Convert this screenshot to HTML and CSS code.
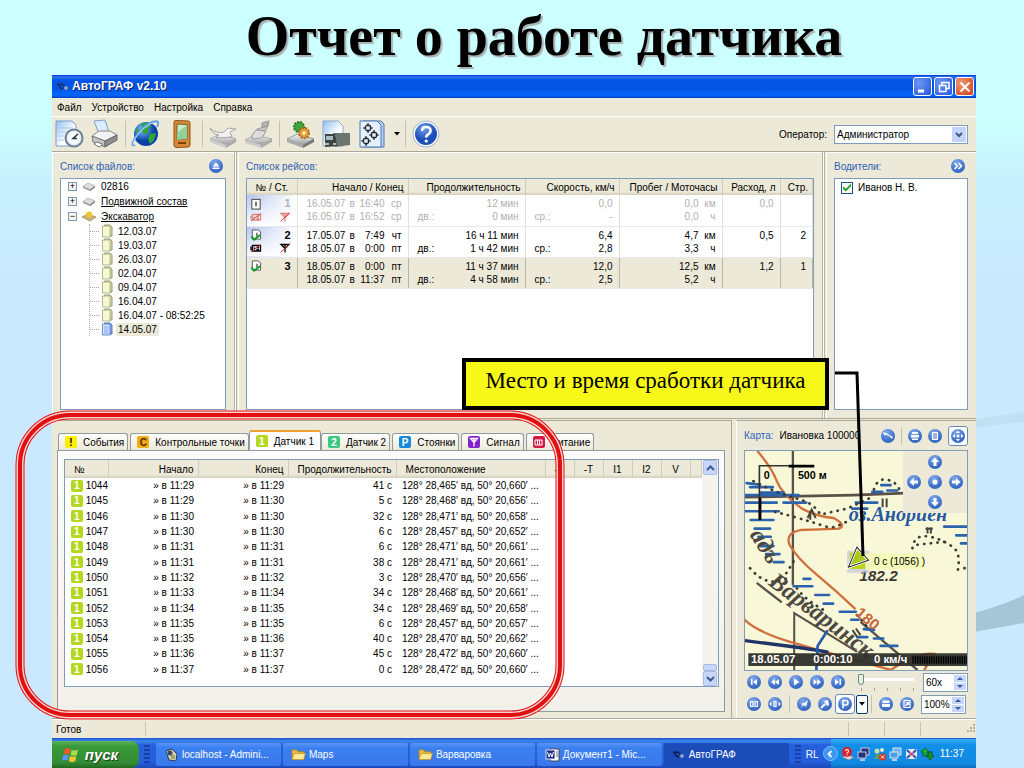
FILE: index.html
```
<!DOCTYPE html>
<html lang="ru">
<head>
  <meta charset="UTF-8">
  <meta name="viewport" content="width=device-width, initial-scale=1.0">
  <title>Отчет о работе датчика</title>
  <link rel="stylesheet" href="styles.css">
</head>
<body>

  <!-- icons -->
  <svg class="sprite" width="0" height="0" aria-hidden="true">
    <defs>
      <linearGradient id="gPaper" x1="0" y1="0" x2="1" y2="1"><stop offset="0" stop-color="#8fc0ef"/><stop offset=".6" stop-color="#fff"/></linearGradient>
      <linearGradient id="gGrey" x1="0" y1="0" x2="0" y2="1"><stop offset="0" stop-color="#f8f8f8"/><stop offset="1" stop-color="#9a9a9a"/></linearGradient>
      <radialGradient id="gGlobe" cx=".35" cy=".3"><stop offset="0" stop-color="#7cc4f8"/><stop offset="1" stop-color="#0a3fa8"/></radialGradient>
      <radialGradient id="gHelp" cx=".4" cy=".25"><stop offset="0" stop-color="#6f9ff0"/><stop offset="1" stop-color="#1f50b8"/></radialGradient>
    </defs>
    <symbol id="i-disk" viewBox="0 0 14 10">
      <path d="M1 5L6 1.500L13 4.500L8 8.500Z" fill="#ddd" stroke="#999" stroke-width=".6"/>
      <path d="M1 5L8 8V9.500L1 6.500Z" fill="#999"/><path d="M8 8L13 4.500V6L8 9.500Z" fill="#777"/>
    </symbol>
    <symbol id="i-doc" viewBox="0 0 12 14">
      <path d="M3.500 1H9L11 3V12H3.500Z" fill="#d9dfae" stroke="#7d8450" stroke-width=".8"/>
      <path d="M1.500 2H7.500L9 3.500V13H1.500Z" fill="#f6f9d4" stroke="#a0a673" stroke-width=".8"/>
    </symbol>
    <symbol id="i-docblue" viewBox="0 0 12 14">
      <path d="M3.500 1H9L11 3V12H3.500Z" fill="#8fb2ee" stroke="#2b57b0" stroke-width=".8"/>
      <path d="M1.500 2H7.500L9 3.500V13H1.500Z" fill="#d5e5ff" stroke="#4a76c8" stroke-width=".8"/>
      <path d="M3 5H7.500M3 7H7.500M3 9H7.500M3 11H7.500" stroke="#6f97e0" stroke-width=".8"/>
    </symbol>
    <symbol id="i-trip" viewBox="0 0 12 13">
      <rect x="1.500" y="1.500" width="9" height="10.500" fill="#fff" stroke="#555" stroke-width="1.200"/>
      <path d="M6 4V9" stroke="#444" stroke-width="1.600"/>
    </symbol>
    <symbol id="i-tripok" viewBox="0 0 12 13">
      <path d="M2 1H8L11 3V11H2Z" fill="#fff" stroke="#555"/><path d="M7 4V8" stroke="#444" stroke-width="1.400"/>
      <path d="M1 8L4 11.500L10.500 6.500" fill="none" stroke="#129a22" stroke-width="2.200"/>
    </symbol>
    <symbol id="i-batt" viewBox="0 0 12 9">
      <path d="M1 3V7M2.500 2H10.500V7.500H2.500ZM4.500 4V6M6.500 4H9M6.500 6H9" fill="none" stroke="currentColor" stroke-width="1.300"/>
      <path d="M1 8.500L11 1" stroke="#e03a30" stroke-width=".9"/>
    </symbol>
    <symbol id="i-ant" viewBox="0 0 12 11">
      <path d="M2 2H10L6 6ZM6 2V10" fill="none" stroke="currentColor" stroke-width="1.300"/>
      <path d="M1.500 10L10.500 1.500" stroke="#e03a30"/>
    </symbol>
    <symbol id="i-folder" viewBox="0 0 16 14">
      <path d="M1 2H6L7.500 4H14V12H1Z" fill="#e8b93a" stroke="#a87d18" stroke-width=".7"/>
      <path d="M3.500 6H15.500L13.500 12.500H1Z" fill="#fdeb9a" stroke="#b98d20" stroke-width=".7"/>
    </symbol>
  </svg>

  <svg class="waves" viewBox="0 0 1024 768" preserveAspectRatio="none" aria-hidden="true">
    <path d="M930 426L1024 412V422Q990 424 930 436Z" fill="#b9dceb" opacity=".6"/>
    <path d="M930 622Q985 614 1024 595V623L930 640Z" fill="#a5c6d6"/>
  </svg>

  <h1 class="slide-title">Отчет о работе датчика</h1>

  <div class="window">
    <header class="titlebar">
      <svg width="14" height="12" viewBox="0 0 14 12" aria-hidden="true"><path d="M1 4L6 3L9 6L12 8M3 6L7 8M2 2L5 8" stroke="#1b2f60" stroke-width="1.500" fill="none"/><circle cx="10" cy="7" r="2" fill="#8ea0c8"/></svg>
      <span class="titlebar-text">АвтоГРАФ v2.10</span>
      <button class="win-btn" aria-label="Свернуть"><svg width="16" height="16" viewBox="0 0 16 16"><path d="M3 12H9" stroke="#fff" stroke-width="3"/></svg></button>
      <button class="win-btn" aria-label="Восстановить"><svg width="16" height="16" viewBox="0 0 16 16"><path d="M6 6V3.500H13V9.500H10.500M3.500 6.500H10V12.500H3.500Z" stroke="#fff" stroke-width="1.500" fill="none"/></svg></button>
      <button class="win-btn close" aria-label="Закрыть"><svg width="16" height="16" viewBox="0 0 16 16"><path d="M3.500 3.500L12.500 12.500M12.500 3.500L3.500 12.500" stroke="#fff" stroke-width="2"/></svg></button>
    </header>

    <nav class="menubar">
      <a href="#">Файл</a>
      <a href="#">Устройство</a>
      <a href="#">Настройка</a>
      <a href="#">Справка</a>
    </nav>

    <div class="toolbar">
      <button class="tool" aria-label="Отчет за период"><svg width="30" height="30" viewBox="0 0 30 30">
        <path d="M2 2H18L22 6V27H2Z" fill="url(#gPaper)" stroke="#7d9cc8"/><path d="M4 9H19M4 13H12M4 17H10M4 21H10" stroke="#a9c8ee"/>
        <circle cx="20" cy="19" r="8.500" fill="#e4eef4" stroke="#6e7f92" stroke-width="2"/><circle cx="20" cy="19" r="6" fill="#f7fbfc"/><path d="M24 15L19 19.500H23" stroke="#234" stroke-width="1.500" fill="none"/></svg></button>
      <button class="tool" aria-label="Печать"><svg width="30" height="30" viewBox="0 0 30 30">
        <path d="M4 2L15 1L19 13L9 15Z" fill="#dcecff" stroke="#7f9fc8"/><path d="M2 17L9 12H20L27 16L15 22Z" fill="#f2f2f2" stroke="#888"/>
        <path d="M2 17L15 22V28L3 23Z" fill="#c4c4c4" stroke="#777"/><path d="M15 22L27 16V21L15 28Z" fill="#8e8e8e" stroke="#666"/><path d="M7 23L13 25.500L9 28L4 25Z" fill="#fff" stroke="#777"/></svg></button>
      <span class="tool-sep"></span>
      <button class="tool" aria-label="Интернет"><svg width="30" height="30" viewBox="0 0 30 30">
        <circle cx="15" cy="15" r="12" fill="url(#gGlobe)"/><path d="M11 5Q16 2 20 6L17 10L18 14L13 15L10 11ZM19 15L25 14Q24 22 19 25L17 20ZM6 9L9 12L7 15L4 13Z" fill="#2fa63a"/>
        <path d="M4 26Q-1 28 4 19Q10 8 21 3Q30 0 26 8" fill="none" stroke="#5f9fe8" stroke-width="2"/><path d="M4 26Q0 26 5 18Q11 9 21 4" fill="none" stroke="#d5eaff" stroke-width=".8"/></svg></button>
      <button class="tool" aria-label="Карманный компьютер"><svg width="30" height="30" viewBox="0 0 30 30">
        <path d="M7 3Q7 1.500 9 1.500L21 2Q23 2 23 4V26Q23 28 21 28L9 28.500Q7 28 7 26Z" fill="#d98a35" stroke="#8c4f14"/><path d="M10 5L20 5.500V20L10 21Z" fill="#c9ecc8" stroke="#7a5a22"/><path d="M10 14L20 6V20L10 21Z" fill="#8fcf98"/><path d="M11 24H19" stroke="#7a4210" stroke-width="2"/></svg></button>
      <span class="tool-sep"></span>
      <button class="tool" aria-label="Записать на диск"><svg width="30" height="30" viewBox="0 0 30 30">
        <path d="M2 20L12 15L28 20L18 26Z" fill="url(#gGrey)" stroke="#aaa"/><path d="M2 20L18 26V29L2 23Z" fill="#ccc"/><path d="M18 26L28 20V23L18 29Z" fill="#aaa"/>
        <path d="M2 9Q8 15 16 13L20 9L28 10L22 13L24 18L8 19L11 16Q4 15 2 9Z" fill="#f2f2f2" stroke="#a4a4a4"/></svg></button>
      <button class="tool" aria-label="Очистить диск"><svg width="30" height="30" viewBox="0 0 30 30">
        <path d="M1 21L11 16L28 20L17 26Z" fill="url(#gGrey)" stroke="#aaa"/><path d="M1 21L17 26V29L1 24Z" fill="#ccc"/><path d="M17 26L28 20V23L17 29Z" fill="#aaa"/>
        <path d="M18 4L25 2L24 7L18 8Z" fill="#b4b4b4" stroke="#999"/><path d="M13 10L24 7L21 12L13 13Z" fill="#c8c8c8" stroke="#999"/><path d="M8 16L12 11L22 12L18 19L8 20Z" fill="#ddd" stroke="#999"/></svg></button>
      <span class="tool-sep"></span>
      <button class="tool" aria-label="Настройки устройства"><svg width="30" height="30" viewBox="0 0 30 30">
        <path d="M2 20L12 15L29 20L18 26Z" fill="url(#gGrey)" stroke="#999"/><path d="M2 20L18 26V29L2 23Z" fill="#aaa"/><path d="M18 26L29 20V23L18 29Z" fill="#777"/>
        <circle cx="14" cy="8" r="5" fill="#3fa53a" stroke="#2b7a28" stroke-width="2" stroke-dasharray="2 1"/><circle cx="19" cy="14" r="5" fill="#e8a43a" stroke="#a86a14" stroke-width="2" stroke-dasharray="2 1"/><circle cx="19" cy="14" r="1.500" fill="#fff"/></svg></button>
      <button class="tool" aria-label="Транспорт"><svg width="30" height="30" viewBox="0 0 30 30">
        <path d="M2 2H17L22 7V27H2Z" fill="url(#gPaper)" stroke="#8fa8cc"/><path d="M12 14L29 14V26L14 28Z" fill="#6b756f"/><path d="M4 15H14L16 27L4 28Z" fill="#3c4643"/><path d="M5 17H12V21H5Z" fill="#a9bcc4"/><path d="M4 25H8M12 25H15" stroke="#e6e6d0" stroke-width="1.500"/></svg></button>
      <button class="tool" aria-label="Контрольные точки"><svg width="30" height="30" viewBox="0 0 30 30">
        <path d="M6 2H24L27 5V28H6Z" fill="#b6cff2" stroke="#4f74b4"/><path d="M3 2H20L24 6V28H3Z" fill="#e3f0ff" stroke="#4f74b4"/>
        <g fill="none" stroke="#222" stroke-width="1.200"><circle cx="11" cy="9" r="2.800"/><path d="M11 4V7.500M11 10.500V14M6 9H9.500M12.500 9H16"/><circle cx="17" cy="16" r="2.800"/><path d="M17 11V14.500M17 17.500V21M12 16H15.500M18.500 16H22"/><circle cx="9" cy="22" r="2.800"/><path d="M9 17V20.500M9 23.500V27M4 22H7.500M10.500 22H14"/></g></svg></button>
      <button class="tool-arrow" aria-label="Еще"><svg width="6" height="4" viewBox="0 0 6 4"><path d="M0 0H6L3 3.500Z" fill="#000"/></svg></button>
      <span class="tool-sep"></span>
      <button class="tool" aria-label="Помощь"><svg width="30" height="30" viewBox="0 0 30 30">
        <circle cx="15" cy="15" r="13" fill="#fff" stroke="#9fb4dc"/><circle cx="15" cy="15" r="11" fill="url(#gHelp)"/><path d="M11 12Q11 8 15 8Q19.500 8 19.500 11.500Q19.500 14 17 15.500Q15.200 16.500 15.200 18.500" fill="none" stroke="#fff" stroke-width="2.600"/><circle cx="15.200" cy="22" r="1.600" fill="#fff"/></svg></button>

      <label class="operator-label" for="operator">Оператор:</label>
      <span class="combo">
        <select id="operator"><option>Администратор</option></select>
        <svg width="14" height="15" viewBox="0 0 14 15" aria-hidden="true"><path d="M4 6L7 9L10 6" fill="none" stroke="#3c5a8c" stroke-width="2"/></svg>
      </span>
    </div>

    <main class="workspace">
      <div class="top-panes">
        <section class="pane">
          <div class="pane-head">
            <h2>Список файлов:</h2>
            <button class="round" aria-label="Свернуть список"><svg viewBox="0 0 14 14"><path d="M3.500 7.500L7 3.500L10.500 7.500ZM3.500 8.500H10.500V10H3.500Z" fill="#fff"/></svg></button>
          </div>
          <div class="box">
            <ul class="tree">
              <li><span class="node"><span class="toggle">+</span><svg class="node-icon"><use href="#i-disk"/></svg><span>02816</span></span></li>
              <li><span class="node"><span class="toggle">+</span><svg class="node-icon"><use href="#i-disk"/></svg><u>Подвижной состав</u></span></li>
              <li><span class="node"><span class="toggle">−</span><svg class="node-icon" viewBox="0 0 14 11"><path d="M0 6L6 3L14 6L8 10Z" fill="#c9b27a" stroke="#8a7442" stroke-width=".6"/><circle cx="7" cy="3.500" r="3" fill="#f2c62c"/></svg><u>Экскаватор</u></span>
                <ul>
                  <li><svg><use href="#i-doc"/></svg><span>12.03.07</span></li>
                  <li><svg><use href="#i-doc"/></svg><span>19.03.07</span></li>
                  <li><svg><use href="#i-doc"/></svg><span>26.03.07</span></li>
                  <li><svg><use href="#i-doc"/></svg><span>02.04.07</span></li>
                  <li><svg><use href="#i-doc"/></svg><span>09.04.07</span></li>
                  <li><svg><use href="#i-doc"/></svg><span>16.04.07</span></li>
                  <li><svg><use href="#i-doc"/></svg><span>16.04.07 - 08:52:25</span></li>
                  <li><svg><use href="#i-docblue"/></svg><span class="current">14.05.07</span></li>
                </ul>
              </li>
            </ul>
          </div>
        </section>

        <section class="pane">
          <div class="pane-head"><h2>Список рейсов:</h2></div>
          <div class="box">
            <table class="trips">
              <colgroup><col class="w-no"><col class="w-time"><col class="w-dur"><col class="w-speed"><col class="w-run"><col class="w-fuel"><col></colgroup>
              <thead>
                <tr><th>№ / Ст.</th><th>Начало / Конец</th><th>Продолжительность</th><th>Скорость, км/ч</th><th>Пробег / Моточасы</th><th>Расход, л</th><th>Стр.</th></tr>
              </thead>
              <tbody>
                <tr class="off">
                  <td><div class="line"><svg class="st"><use href="#i-trip"/></svg><b>1</b></div><div class="line red"><svg class="st"><use href="#i-batt"/></svg><svg class="st"><use href="#i-ant"/></svg></div></td>
                  <td><div class="when"><span>16.05.07</span><span>в</span><span>16:40</span><span>ср</span></div><div class="when"><span>16.05.07</span><span>в</span><span>16:52</span><span>ср</span></div></td>
                  <td><div class="line"><span></span><span>12 мин</span></div><div class="line"><span>дв.:</span><span>0 мин</span></div></td>
                  <td><div class="line"><span></span><span>0,0</span></div><div class="line"><span>ср.:</span><span>-</span></div></td>
                  <td><div class="run"><span>0,0</span><span>км</span></div><div class="run"><span>0,0</span><span>ч</span></div></td>
                  <td>0,0</td>
                  <td></td>
                </tr>
                <tr>
                  <td><div class="line"><svg class="st"><use href="#i-tripok"/></svg><b>2</b></div><div class="line"><svg class="st"><use href="#i-batt"/></svg><svg class="st"><use href="#i-ant"/></svg></div></td>
                  <td><div class="when"><span>17.05.07</span><span>в</span><span>7:49</span><span>чт</span></div><div class="when"><span>18.05.07</span><span>в</span><span>0:00</span><span>пт</span></div></td>
                  <td><div class="line"><span></span><span>16 ч 11 мин</span></div><div class="line"><span>дв.:</span><span>1 ч 42 мин</span></div></td>
                  <td><div class="line"><span></span><span>6,4</span></div><div class="line"><span>ср.:</span><span>2,8</span></div></td>
                  <td><div class="run"><span>4,7</span><span>км</span></div><div class="run"><span>3,3</span><span>ч</span></div></td>
                  <td>0,5</td>
                  <td>2</td>
                </tr>
                <tr class="picked">
                  <td><div class="line"><svg class="st"><use href="#i-tripok"/></svg><b>3</b></div></td>
                  <td><div class="when"><span>18.05.07</span><span>в</span><span>0:00</span><span>пт</span></div><div class="when"><span>18.05.07</span><span>в</span><span>11:37</span><span>пт</span></div></td>
                  <td><div class="line"><span></span><span>11 ч 37 мин</span></div><div class="line"><span>дв.:</span><span>4 ч 58 мин</span></div></td>
                  <td><div class="line"><span></span><span>12,0</span></div><div class="line"><span>ср.:</span><span>2,5</span></div></td>
                  <td><div class="run"><span>12,5</span><span>км</span></div><div class="run"><span>5,2</span><span>ч</span></div></td>
                  <td>1,2</td>
                  <td>1</td>
                </tr>
              </tbody>
            </table>
          </div>
        </section>

        <section class="pane">
          <div class="pane-head">
            <h2>Водители:</h2>
            <button class="round" aria-label="Развернуть"><svg viewBox="0 0 14 14"><path d="M3.500 4L6.500 7L3.500 10M7.500 4L10.500 7L7.500 10" fill="none" stroke="#fff" stroke-width="1.500"/></svg></button>
          </div>
          <div class="box">
            <label class="driver"><input type="checkbox" checked>Иванов Н. В.</label>
          </div>
        </section>
      </div>

      <div class="bottom-panes">
        <section class="events">
          <div class="tabs" role="tablist">
            <button role="tab"><i class="badge yellow">!</i>События</button>
            <button role="tab"><i class="badge amber">C</i>Контрольные точки</button>
            <button role="tab" class="active" aria-selected="true"><i class="badge lime">1</i>Датчик 1</button>
            <button role="tab"><i class="badge mint">2</i>Датчик 2</button>
            <button role="tab"><i class="badge blue">P</i>Стоянки</button>
            <button role="tab"><i class="badge violet"><svg width="10" height="10" viewBox="0 0 10 10" aria-hidden="true"><path d="M1.500 1.500H8.500L5 5.500ZM5 2V9.500" fill="none" stroke="#fff" stroke-width="1.300"/></svg></i>Сигнал</button>
            <button role="tab"><i class="badge crimson"><svg width="9" height="7" viewBox="0 0 9 7" aria-hidden="true"><path d="M1 1H8V6H1ZM3.500 1V6M5.500 1V6" fill="none" stroke="#fff"/></svg></i>Питание</button>
          </div>
          <div class="tab-page">
            <div class="list">
              <table class="sensor">
                <colgroup><col class="s-no"><col class="s-from"><col class="s-to"><col class="s-dur"><col class="s-place"><col class="s-in"><col class="s-in"><col class="s-in"><col class="s-in"><col class="s-in"><col></colgroup>
                <thead>
                  <tr><th>№</th><th>Начало</th><th>Конец</th><th>Продолжительность</th><th>Местоположение</th><th>-B</th><th>-T</th><th>I1</th><th>I2</th><th>V</th><th></th></tr>
                </thead>
                <tbody>
                  <tr><td><i class="badge lime">1</i>1044</td><td>» в 11:29</td><td>» в 11:29</td><td>41 с</td><td colspan="7">128° 28,465′ вд, 50° 20,660′ ...</td></tr>
                  <tr><td><i class="badge lime">1</i>1045</td><td>» в 11:29</td><td>» в 11:30</td><td>5 с</td><td colspan="7">128° 28,468′ вд, 50° 20,656′ ...</td></tr>
                  <tr><td><i class="badge lime">1</i>1046</td><td>» в 11:30</td><td>» в 11:30</td><td>32 с</td><td colspan="7">128° 28,471′ вд, 50° 20,658′ ...</td></tr>
                  <tr><td><i class="badge lime">1</i>1047</td><td>» в 11:30</td><td>» в 11:30</td><td>6 с</td><td colspan="7">128° 28,457′ вд, 50° 20,652′ ...</td></tr>
                  <tr><td><i class="badge lime">1</i>1048</td><td>» в 11:31</td><td>» в 11:31</td><td>6 с</td><td colspan="7">128° 28,471′ вд, 50° 20,661′ ...</td></tr>
                  <tr><td><i class="badge lime">1</i>1049</td><td>» в 11:31</td><td>» в 11:31</td><td>38 с</td><td colspan="7">128° 28,471′ вд, 50° 20,661′ ...</td></tr>
                  <tr><td><i class="badge lime">1</i>1050</td><td>» в 11:32</td><td>» в 11:32</td><td>3 с</td><td colspan="7">128° 28,470′ вд, 50° 20,656′ ...</td></tr>
                  <tr><td><i class="badge lime">1</i>1051</td><td>» в 11:33</td><td>» в 11:34</td><td>34 с</td><td colspan="7">128° 28,468′ вд, 50° 20,661′ ...</td></tr>
                  <tr><td><i class="badge lime">1</i>1052</td><td>» в 11:34</td><td>» в 11:35</td><td>34 с</td><td colspan="7">128° 28,469′ вд, 50° 20,658′ ...</td></tr>
                  <tr><td><i class="badge lime">1</i>1053</td><td>» в 11:35</td><td>» в 11:35</td><td>6 с</td><td colspan="7">128° 28,457′ вд, 50° 20,657′ ...</td></tr>
                  <tr><td><i class="badge lime">1</i>1054</td><td>» в 11:35</td><td>» в 11:36</td><td>40 с</td><td colspan="7">128° 28,470′ вд, 50° 20,662′ ...</td></tr>
                  <tr><td><i class="badge lime">1</i>1055</td><td>» в 11:36</td><td>» в 11:37</td><td>45 с</td><td colspan="7">128° 28,472′ вд, 50° 20,660′ ...</td></tr>
                  <tr><td><i class="badge lime">1</i>1056</td><td>» в 11:37</td><td>» в 11:37</td><td>0 с</td><td colspan="7">128° 28,472′ вд, 50° 20,660′ ...</td></tr>
                </tbody>
              </table>
              <div class="scroll">
                <button aria-label="Вверх"><svg width="9" height="6" viewBox="0 0 9 6"><path d="M1 5L4.500 1.500L8 5" fill="none" stroke="#3c5a8c" stroke-width="2"/></svg></button>
                <span class="track"></span>
                <span class="thumb"></span>
                <button aria-label="Вниз"><svg width="9" height="6" viewBox="0 0 9 6"><path d="M1 1L4.500 4.500L8 1" fill="none" stroke="#3c5a8c" stroke-width="2"/></svg></button>
              </div>
            </div>
          </div>
        </section>

        <section class="map-pane">
          <div class="map-head">
            <h2>Карта:</h2>
            <span class="map-name">Ивановка 100000</span>
            <button class="round" aria-label="Слой"><svg viewBox="0 0 14 14"><path d="M2 3L5 4Q8 6 12 8L11 10Q7 5 3 6Z" fill="#fff"/></svg></button>
            <span class="tool-sep"></span>
            <button class="round" aria-label="Печать карты"><svg viewBox="0 0 14 14"><path d="M4 3H10V5H4ZM3 6H11V8.500H3ZM4 9.500H10V11H4Z" fill="#fff"/></svg></button>
            <button class="round" aria-label="Легенда"><svg viewBox="0 0 14 14"><path d="M4 3H10V11H4Z" fill="#fff"/><path d="M5 5H9M5 7H9M5 9H9" stroke="#3a6cc4"/></svg></button>
            <span class="framed"><button class="round" aria-label="Навигация"><svg viewBox="0 0 14 14"><path d="M7 1.500L9 4H5ZM7 12.500L9 10H5ZM1.500 7L4 5V9ZM12.500 7L10 5V9Z" fill="#fff"/><circle cx="7" cy="7" r="1.500" fill="#fff"/></svg></button></span>
          </div>

          <div class="map">
            <svg class="map-canvas" viewBox="42 90 669 654" preserveAspectRatio="xMidYMid slice" role="img" aria-label="Карта местности">
              <rect x="0" y="0" width="760" height="800" fill="#f8f8d8"/>
              <g fill="none" stroke="#5a5048">
                <path d="M188 90V490" stroke-width="7"/><path d="M42 228L370 222L520 216" stroke-width="8"/><path d="M192 744V574L380 690" stroke-width="6"/>
                <path d="M80 484L155 542M390 600L470 668L560 744" stroke-width="7"/>
              </g>
              <g fill="none" stroke="#d0703c" stroke-width="7">
                <path d="M82 90Q125 140 140 180T215 262Q260 286 310 290Q350 312 325 322Q270 325 210 326Q165 335 178 370Q200 410 260 460T375 562"/>
                <path d="M42 592Q80 630 180 660T380 715L480 744M480 744Q560 690 610 696L580 744"/>
              </g>
              <g fill="none" stroke="#2c62ac" stroke-width="8" stroke-linecap="round">
                <path d="M45 222H205M50 186L88 190M60 198H128M92 214H160M42 244H140M160 244H228M42 270H146M62 296H130M74 322H120M85 346H122M90 374H130M108 398H148M132 422H160M190 494H246M220 472H240M255 520H296M280 546H308M328 570H376M362 594H384M376 244H440M365 262H410M452 192H480M425 212H455M470 208H500M640 316L708 316M676 342H708M690 366H708M400 622L430 624M430 650L458 650M450 672H500M380 646H410"/>
                <path d="M42 656L200 676L290 690" stroke="#1f3566" stroke-width="10"/><path d="M290 628L262 672L258 744" stroke="#2858b0"/>
              </g>
              <g fill="none" stroke="#3c3a34" stroke-width="8" stroke-linecap="round" stroke-dasharray="1 19">
                <path d="M135 272Q210 290 300 320Q330 312 350 300M70 180Q150 220 200 232T270 280L350 262L430 225M430 205Q440 170 470 176T510 215M545 380Q550 340 590 345T670 380Q690 400 680 450M560 370L650 360M60 440Q110 500 170 470M190 420L165 460M200 500Q230 540 290 570M700 440H705M380 580L410 615"/>
              </g>
              <path d="M232 290L244 265L256 290M240 270V295M456 232V258M468 232V258M584 322H606M590 318V336M600 318V336M366 625L380 645M376 620L390 640" stroke="#4a443c" stroke-width="6" fill="none"/>
              <text class="map-lake" x="355" y="298">оз.Анориен</text>
              <text class="map-village" transform="translate(58 340) rotate(58)">адъ</text>
              <text class="map-village" transform="translate(112 488) rotate(37)">Варваринск</text>
              <text class="map-contour" transform="translate(372 578) rotate(40)">180</text>
              <text class="map-height" x="386" y="479">182.2</text>
              <rect x="350" y="388" width="66" height="66" fill="#c4c4dc" opacity=".7"/>
              <rect x="358" y="394" width="46" height="48" fill="#bcd318"/>
              <rect x="405" y="396" width="175" height="48" fill="#f2f8b4" opacity=".9"/>
              <path d="M379 377L414 416L354 437Z" fill="#a9c820" stroke="#fff" stroke-width="8"/><path d="M379 377L414 416L354 437Z" fill="none" stroke="#222" stroke-width="3"/>
              <text class="map-note" x="430" y="431">0 с (1056) )</text>
              <path d="M88 296V134H175" fill="none" stroke="#333" stroke-width="5"/><path d="M90 296V230M175 135H252" stroke="#000" stroke-width="8"/>
              <text class="map-scale" x="101" y="173">0</text>
              <text class="map-scale" x="203" y="173">500 м</text>
              <rect x="55" y="694" width="653" height="38" fill="#2e2e2a" opacity=".94"/>
              <path d="M545 714H708" stroke="#000" stroke-width="22" stroke-dasharray="4 3"/>
              <text class="map-status" x="63" y="724">18.05.07</text>
              <text class="map-status" x="249" y="724">0:00:10</text>
              <text class="map-status" x="430" y="724">0 км/ч</text>
            </svg>
            <div class="nav-pad">
              <button class="round up" aria-label="Север"><svg viewBox="0 0 14 14"><path d="M7 2.500L11 7H8.500V11H5.500V7H3Z" fill="#fff"/></svg></button>
              <button class="round left" aria-label="Запад"><svg viewBox="0 0 14 14"><path d="M2.500 7L7 3V5.500H11V8.500H7V11Z" fill="#fff"/></svg></button>
              <button class="round mid" aria-label="Центр"><svg viewBox="0 0 14 14"><circle cx="7" cy="7" r="2.600" fill="#fff"/></svg></button>
              <button class="round right" aria-label="Восток"><svg viewBox="0 0 14 14"><path d="M11.500 7L7 3V5.500H3V8.500H7V11Z" fill="#fff"/></svg></button>
              <button class="round down" aria-label="Юг"><svg viewBox="0 0 14 14"><path d="M7 11.500L11 7H8.500V3H5.500V7H3Z" fill="#fff"/></svg></button>
            </div>
          </div>

          <div class="player">
            <button class="round" aria-label="В начало"><svg viewBox="0 0 14 14"><path d="M4 4H5.500V10H4ZM10 4V10L6 7Z" fill="#fff"/></svg></button>
            <button class="round" aria-label="Назад"><svg viewBox="0 0 14 14"><path d="M7 4V10L3 7ZM11 4V10L7 7Z" fill="#fff"/></svg></button>
            <button class="round" aria-label="Пуск"><svg viewBox="0 0 14 14"><path d="M5 3.500V10.500L10.500 7Z" fill="#fff"/></svg></button>
            <button class="round" aria-label="Вперед"><svg viewBox="0 0 14 14"><path d="M3.500 4V10L7 7ZM7 4V10L11 7Z" fill="#fff"/></svg></button>
            <button class="round" aria-label="В конец"><svg viewBox="0 0 14 14"><path d="M8.500 4H10V10H8.500ZM4 4V10L8 7Z" fill="#fff"/></svg></button>
            <input class="speed" type="range" min="0" max="4" value="0" aria-label="Скорость">
            <span class="spin"><input type="text" value="60x" aria-label="Ускорение"><span class="spin-btns"><button aria-label="Больше"><svg viewBox="0 0 8 5"><path d="M1 4L4 1L7 4Z" fill="#3c5a9c"/></svg></button><button aria-label="Меньше"><svg viewBox="0 0 8 5"><path d="M1 1L4 4L7 1Z" fill="#3c5a9c"/></svg></button></span></span>
          </div>
          <div class="player modes">
            <button class="round" aria-label="Пауза"><svg viewBox="0 0 14 14"><path d="M3.500 4.500H6V9.500H3.500ZM8 4.500H10.500V9.500H8Z" fill="none" stroke="#fff" stroke-width="1.200"/></svg></button>
            <button class="round" aria-label="Остановки"><svg viewBox="0 0 14 14"><path d="M6 4.500H8V9.500H6ZM3.500 5.500L2 7L3.500 8.500M10.500 5.500L12 7L10.500 8.500" fill="none" stroke="#fff" stroke-width="1.200"/></svg></button>
            <span class="tool-sep"></span>
            <button class="round" aria-label="Точка"><svg viewBox="0 0 14 14"><path d="M3 11L6 8L3.500 7L8 5.500L11 3L9 10L7.500 8Z" fill="#fff"/></svg></button>
            <button class="round" aria-label="Ключ"><svg viewBox="0 0 14 14"><path d="M3 11L7 7" stroke="#fff" stroke-width="2"/><path d="M6 4L10 3L11 8L9 9Z" fill="#fff"/></svg></button>
            <span class="framed"><button class="round" aria-label="Стоянки"><svg viewBox="0 0 14 14"><path d="M5 11.500V3.500H8Q10 3.500 10 5.700T8 8H5" fill="none" stroke="#fff" stroke-width="1.600"/></svg></button></span>
            <button class="drop" aria-label="Список"><svg width="6" height="4" viewBox="0 0 6 4"><path d="M0 0H6L3 3.500Z" fill="#000"/></svg></button>
            <span class="tool-sep"></span>
            <button class="round" aria-label="Машина"><svg viewBox="0 0 14 14"><path d="M3.500 3.500H10.500V6H3.500ZM3 7H11V10H3Z" fill="#fff"/></svg></button>
            <button class="round" aria-label="Масштаб"><svg viewBox="0 0 14 14"><path d="M4 3.500H10V10.500H4ZM5.500 9L8.500 5.500M6 5.500H8.500V8" fill="none" stroke="#fff" stroke-width="1.200"/></svg></button>
            <span class="spin"><input type="text" value="100%" aria-label="Масштаб карты"><span class="spin-btns"><button aria-label="Крупнее"><svg viewBox="0 0 8 5"><path d="M1 4L4 1L7 4Z" fill="#3c5a9c"/></svg></button><button aria-label="Мельче"><svg viewBox="0 0 8 5"><path d="M1 1L4 4L7 1Z" fill="#3c5a9c"/></svg></button></span></span>
          </div>
        </section>
      </div>
    </main>

    <footer class="statusbar">
      <span class="ready">Готов</span>
      <span class="fill"></span>
      <span class="part"></span>
      <span class="part"></span>
      <span class="part"></span>
      <svg width="10" height="10" viewBox="0 0 10 10" aria-hidden="true"><path d="M7 1H9M4 4H6M7 4H9M1 7H3M4 7H6M7 7H9" stroke="#b4b09c" stroke-width="2"/></svg>
    </footer>
  </div>

  <div class="taskbar">
    <button class="start"><svg width="19" height="18" viewBox="0 0 17 17" aria-hidden="true"><path d="M3 3Q6 1 8.500 3L7.500 8Q5 6.500 2 8Z" fill="#ee5a2c"/><path d="M9.500 3.500Q12 5 15.500 3.500L14.500 8.500Q11.500 10 8.500 8.500Z" fill="#9fe04a"/><path d="M1.500 9Q4.500 7.500 7 9L6 14Q3.500 12.500 .5 14Z" fill="#5a96ff"/><path d="M8 9.500Q11 11 14 9.500L13 14.500Q10 16 7 14.500Z" fill="#f8c62c"/></svg>пуск</button>
    <span class="grip"></span>
    <button class="task"><svg width="15" height="14" viewBox="0 0 15 14" aria-hidden="true"><path d="M2 3L8 1L13 6L12 13L5 12Z" fill="#d8cfa8" stroke="#2d3c66"/><circle cx="6" cy="5" r="2.500" fill="#3c4a70"/><path d="M7 8H11M7 10H11" stroke="#5c7a3c"/></svg><span>localhost - Admini...</span></button>
    <button class="task"><svg width="15" height="13"><use href="#i-folder"/></svg><span>Maps</span></button>
    <button class="task"><svg width="15" height="13"><use href="#i-folder"/></svg><span>Варваровка</span></button>
    <button class="task"><svg width="15" height="14" viewBox="0 0 15 14" aria-hidden="true"><path d="M5 1H14V13H5Z" fill="#fff" stroke="#445"/><path d="M11 4H13M11 6H13M11 8H13" stroke="#668"/><rect x="1" y="2" width="9" height="9" fill="#1f2f8c" stroke="#fff" stroke-width=".8"/><path d="M2.500 4L4 9L5.500 5L7 9L8.500 4" fill="none" stroke="#fff"/></svg><span>Документ1 - Mic...</span></button>
    <button class="task on"><svg width="14" height="12" viewBox="0 0 14 12" aria-hidden="true"><path d="M1 4L6 3L9 6L12 8M3 6L7 8M2 2L5 8" stroke="#10205a" stroke-width="1.500" fill="none"/><circle cx="10" cy="7" r="2" fill="#8ea0c8"/></svg><span>АвтоГРАФ</span></button>
    <span class="grip"></span>
    <span class="lang">RL</span>
    <div class="tray">
      <button class="tray-open" aria-label="Показать значки"><svg width="8" height="8" viewBox="0 0 8 8"><path d="M5.500 1L2.500 4L5.500 7" fill="none" stroke="#fff" stroke-width="1.800"/></svg></button>
      <svg width="13" height="14" viewBox="0 0 13 14" aria-hidden="true"><path d="M1 10L6 8L13 10L8 13Z" fill="#ddd" stroke="#777" stroke-width=".6"/><circle cx="6" cy="5" r="5" fill="#d8202c"/><path d="M4.500 4Q4.500 2.500 6 2.500T7.500 4T6 6V6.500M6 7.500V8.500" fill="none" stroke="#fff" stroke-width="1.200"/></svg>
      <svg width="13" height="14" viewBox="0 0 13 14" aria-hidden="true"><rect x="4" y="1" width="8" height="7" fill="#26307c" stroke="#c8c8d8"/><rect x="1" y="5" width="8" height="6" fill="#26307c" stroke="#c8c8d8"/><path d="M3 13H8" stroke="#ddd" stroke-width="1.500"/></svg>
      <svg width="13" height="14" viewBox="0 0 13 14" aria-hidden="true"><circle cx="4" cy="4" r="2.500" fill="#bfe2a8"/><circle cx="9" cy="3" r="2" fill="#e0ecd8"/><path d="M1 12L3 7H7L8 12Z" fill="#5a9c6a"/><circle cx="9.500" cy="10" r="3.500" fill="#d83424"/><path d="M8 8.500L11 11.500M11 8.500L8 11.500" stroke="#fff"/></svg>
      <svg width="13" height="14" viewBox="0 0 13 14" aria-hidden="true"><rect x="4" y="1" width="8" height="7" fill="#6cb4f4" stroke="#d8e4f4"/><rect x="1" y="5" width="8" height="6" fill="#4c9cec" stroke="#d8e4f4"/><path d="M3 13H8" stroke="#eee" stroke-width="1.500"/></svg>
      <svg width="13" height="14" viewBox="0 0 13 14" aria-hidden="true"><rect x="1" y="2" width="11" height="10" rx="2" fill="#e6e8f8"/><path d="M2 3L5 6M11 3L8 6M2 11L5 8M11 11L8 8" stroke="#4a4a9c" stroke-width="2"/><circle cx="6.500" cy="7" r="1.500" fill="#c03a5a"/></svg>
      <svg width="13" height="14" viewBox="0 0 13 14" aria-hidden="true"><path d="M4 1L8 5H6V9H2V5H0Z" fill="#18b030" stroke="#064c14" stroke-width=".7"/><path d="M9 13L13 9H11V5H7.500V9H5.500Z" fill="#129424" stroke="#064c14" stroke-width=".7"/></svg>
      <time>11:37</time>
    </div>
  </div>

  <!-- slide annotations -->
  <svg class="marks" viewBox="0 0 1024 768" aria-hidden="true">
    <g fill="none">
      <rect x="20" y="415" width="540" height="300" rx="50" stroke="#e01010" stroke-width="9"/>
      <rect x="20" y="415" width="540" height="300" rx="50" stroke="#fbd0d0" stroke-width="7"/>
      <rect x="20" y="415" width="540" height="300" rx="50" stroke="#e01010" stroke-width="4"/>
      <path d="M835 373H857L863 556" stroke="#000" stroke-width="3"/>
    </g>
  </svg>
  <p class="callout">Место и время сработки датчика</p>

</body>
</html>
```
FILE: styles.css
```
* {
  margin: 0;
  padding: 0;
  box-sizing: border-box;
}

body {
  font-family: "Liberation Sans", Arial, sans-serif;
  font-size: 10px;
  line-height: 13px;
  color: #000;
  background: linear-gradient(#ccffff 0, #ccffff 120px, #c8f1fd 180px, #cae9ff 280px, #cae9ff 100%);
  min-height: 100vh;
  display: flex;
  flex-direction: column;
  position: relative;
}

button,
input,
select {
  font: inherit;
  color: inherit;
  border: none;
  background: none;
}

button {
  display: flex;
  align-items: center;
  justify-content: center;
  cursor: pointer;
}

a {
  color: inherit;
  text-decoration: none;
}

h2 {
  font-size: 10px;
  font-weight: normal;
  color: #2f62b5;
}

.sprite {
  position: absolute;
}

.waves {
  position: absolute;
  inset: 0;
  width: 100%;
  height: 100%;
}

.slide-title {
  font-family: "Liberation Serif", "Times New Roman", serif;
  font-size: 56px;
  line-height: 73px;
  padding-bottom: 2px;
  text-align: center;
  padding-left: 64px;
  text-shadow: 2px 2px 1px #a8b0b0;
  position: relative;
}

/* application window */
.window {
  flex: 1;
  margin: 0 48px 0 52px;
  display: flex;
  flex-direction: column;
  background: #ece9d8;
  position: relative;
}

.titlebar {
  height: 23px;
  display: flex;
  align-items: center;
  gap: 2px;
  padding: 0 2px 0 4px;
  background: linear-gradient(#0831d9 0, #2a78ee 2px, #0455e4 5px, #0455e4 14px, #0668ff 20px, #0340c8 23px);
}

.titlebar-text {
  flex: 1;
  color: #fff;
  font-size: 12px;
  font-weight: bold;
  text-shadow: 1px 1px 0 #0a1f6e;
}

.win-btn {
  width: 19px;
  height: 19px;
  border: 1px solid #fff;
  border-radius: 3px;
  background: radial-gradient(circle at 30% 30%, #6f97f5, #2455d8);
}

.win-btn.close {
  background: radial-gradient(circle at 30% 30%, #f09a78, #d23a12);
}

.menubar {
  height: 18px;
  display: flex;
  align-items: center;
  gap: 10px;
  padding-left: 5px;
}

.toolbar {
  height: 36px;
  display: flex;
  align-items: center;
  gap: 4px;
  padding: 0 8px 0 1px;
  border-top: 1px solid #fff;
  border-bottom: 1px solid #aca899;
}

.tool {
  width: 32px;
  height: 32px;
}

.tool-arrow {
  width: 9px;
  height: 32px;
}

.tool-sep {
  width: 1px;
  height: 26px;
  background: #c5c2b0;
}

.operator-label {
  margin-left: auto;
}

.combo {
  display: grid;
  align-items: center;
  width: 134px;
  margin-left: 3px;
}

.combo select {
  grid-area: 1 / 1;
  appearance: none;
  height: 19px;
  padding-left: 2px;
  background: #fff;
  border: 1px solid #7f9db9;
}

.combo svg {
  grid-area: 1 / 1;
  justify-self: end;
  margin-right: 2px;
  background: #c4d4fb;
  pointer-events: none;
}

/* panes */
.workspace {
  flex: 1;
  display: grid;
  grid-template-columns: minmax(0, 1fr);
  grid-template-rows: 267fr 300fr;
}

.top-panes {
  display: grid;
  grid-template-columns: 182px minmax(0, 1fr) 150px;
  gap: 4px;
  background: #ece9d8;
  border-bottom: 1px solid #aca899;
}

.pane {
  display: flex;
  flex-direction: column;
  padding: 1px 8px 8px 7px;
  border-top: 1px solid #fff;
  border-left: 1px solid #fff;
}

.pane:not(:last-child) {
  box-shadow: 1px 0 0 #b8b4a2, 2px 0 0 #fff, 3px 0 0 #b8b4a2;
}

.pane-head {
  height: 24px;
  display: flex;
  align-items: center;
  justify-content: space-between;
  padding-right: 3px;
}

.box {
  flex: 1;
  background: #fff;
  border: 1px solid #7f9db9;
}

.round {
  width: 14px;
  height: 14px;
  flex: none;
  border-radius: 50%;
  background: radial-gradient(circle at 40% 25%, #80a8ec, #3568c4 70%);
}

.round svg {
  width: 14px;
  height: 14px;
}

/* file tree */
.tree {
  list-style: none;
  padding-left: 7px;
}

.node {
  height: 15px;
  display: flex;
  align-items: center;
}

.node-icon {
  width: 14px;
  height: 11px;
  margin: 0 5px 0 5px;
}

.toggle {
  width: 9px;
  height: 9px;
  border: 1px solid #7898b5;
  font-size: 9px;
  line-height: 7px;
  text-align: center;
  background: #f6f4ec;
}

.tree ul {
  list-style: none;
  margin-left: 21px;
  border-left: 1px dotted #a8a8a8;
}

.tree ul li {
  height: 14px;
  display: flex;
  align-items: center;
}

.tree ul li::before {
  content: "";
  width: 9px;
  margin-right: 2px;
  border-top: 1px dotted #a8a8a8;
}

.tree ul svg {
  width: 12px;
  height: 14px;
  margin-right: 3px;
}

.tree ul span {
  padding: 0 2px;
}

.tree .current {
  background: #ece9d8;
}

/* tables */
table {
  width: 100%;
  border-collapse: collapse;
  table-layout: fixed;
}

th {
  height: 16px;
  font-weight: normal;
  text-align: right;
  padding-right: 4px;
  white-space: nowrap;
  background: linear-gradient(#ece9d8 80%, #d2cebc);
  border-right: 1px solid #d0ccba;
}

td {
  text-align: right;
  white-space: nowrap;
}

.w-no { width: 50px; }
.w-time { width: 111px; }
.w-dur { width: 117px; }
.w-speed { width: 94px; }
.w-run { width: 103px; }
.w-fuel { width: 58px; }

.trips th:first-child {
  text-align: center;
  padding-right: 0;
}

.trips td {
  height: 31px;
  padding: 2px 6px 2px 9px;
  vertical-align: top;
  border-right: 1px solid #e4e2d8;
  border-bottom: 1px solid #e8e8e8;
}

.trips td:first-child {
  padding-left: 3px;
  background: linear-gradient(to right, transparent, #fff), linear-gradient(#b4c4f0, #fff);
}

.trips .off {
  color: #b0b0b0;
}

.trips .picked td {
  background: #ece9d8;
  border-right-color: #bab6a4;
}

.line {
  height: 13px;
  display: flex;
  align-items: center;
  justify-content: space-between;
}

.line b {
  font-size: 11px;
}

.red {
  color: #d88880;
}

.st {
  width: 12px;
  height: 12px;
}

.when {
  display: grid;
  grid-template-columns: 43px 8px 1fr 17px;
}

.when span:nth-child(-n+2) {
  text-align: left;
}

.run {
  display: grid;
  grid-template-columns: 1fr 17px;
}

.driver {
  display: flex;
  align-items: center;
  gap: 5px;
  padding: 2px 6px;
}

.driver input {
  appearance: none;
  width: 12px;
  height: 12px;
  border: 1px solid #1c5180;
  background: #fff;
  display: grid;
  place-items: center;
}

.driver input:checked::before {
  content: "";
  width: 8px;
  height: 8px;
  background: #21a121;
  clip-path: polygon(0 35%, 35% 65%, 100% 0, 100% 35%, 35% 100%, 0 70%);
}

.bottom-panes {
  display: grid;
  grid-template-columns: minmax(0, 1fr) 240px;
  gap: 4px;
  background: #ece9d8;
  border-top: 1px solid #ece9d8;
  border-bottom: 1px solid #aca899;
}

/* tabs */
.events {
  display: flex;
  flex-direction: column;
  padding: 9px 6px 6px 5px;
  border-top: 1px solid #aca899;
  border-right: 1px solid #aca899;
}

.tabs {
  height: 20px;
  display: flex;
  align-items: flex-end;
  gap: 2px;
  padding-left: 1px;
}

.tabs button {
  height: 17px;
  gap: 6px;
  padding: 0 3px 0 6px;
  white-space: nowrap;
  background: linear-gradient(#fff, #ece9d8);
  border: 1px solid #919b9c;
  border-bottom: none;
  border-radius: 3px 3px 0 0;
}

.tabs .active {
  height: 20px;
  padding: 0 6px;
  background: #fcfcfe;
  border-top: 2px solid #f0a030;
  margin: 0 -2px;
}

.badge {
  display: inline-flex;
  align-items: center;
  justify-content: center;
  width: 12px;
  height: 12px;
  border-radius: 2px;
  font-style: normal;
  font-weight: bold;
  font-size: 10px;
  color: #fff;
}

.yellow { background: #ffee00; color: #000; }
.amber { background: #f0ac10; color: #4a2400; }
.lime { background: #b4d820; }
.mint { background: #3cc880; }
.blue { background: #1888d8; }
.violet { background: #8424c8; }
.crimson { background: #d81848; }

.tab-page {
  flex: 1;
  padding: 8px 5px 24px 6px;
  background: linear-gradient(#fcfcfe, #f2f0ea);
  border: 1px solid #919b9c;
}

.list {
  height: 100%;
  display: flex;
  background: #fff;
  border: 1px solid #7f9db9;
}

.list .sensor {
  flex: 1;
  width: auto;
  min-width: 0;
  height: 217px;
}

.sensor th {
  height: 18px;
}

.sensor td {
  padding-right: 4px;
}

.sensor th:first-child {
  text-align: left;
  padding-left: 9px;
}

.sensor td:first-child {
  padding-right: 0;
}

.sensor td:first-child .badge {
  margin-right: 3px;
}

.sensor th:nth-child(5) {
  text-align: left;
  padding-left: 9px;
}

.sensor td:nth-child(5) {
  text-align: left;
  padding-left: 6px;
}

.sensor th:nth-child(n+6) {
  text-align: center;
  padding-right: 0;
}

.s-no { width: 43px; }
.s-from { width: 90px; }
.s-to { width: 90px; }
.s-dur { width: 108px; }
.s-place { width: 149px; }
.s-in { width: 29px; }

.scroll {
  width: 16px;
  flex: none;
  display: flex;
  flex-direction: column;
  background: #f4f3ee;
}

.scroll button {
  height: 15px;
  margin: 0 1px;
  background: #c8d6fb;
  border: 1px solid #a8bce8;
  border-radius: 2px;
}

.track {
  flex: 1;
}

.thumb {
  height: 7px;
  margin: 0 1px;
  background: #c8d6fb;
  border: 1px solid #a8bce8;
  border-radius: 2px;
}

/* map */
.map-pane {
  display: flex;
  flex-direction: column;
  padding: 0 8px 3px 7px;
  border-top: 1px solid #aca899;
  border-left: 1px solid #fff;
}

.map-head {
  height: 29px;
  display: flex;
  align-items: center;
  gap: 6px;
}

.map-name {
  flex: 1;
}

.map-head .tool-sep,
.player .tool-sep {
  height: 18px;
}

.framed {
  width: 20px;
  height: 20px;
  flex: none;
  display: flex;
  align-items: center;
  justify-content: center;
  background: #fff;
  border: 1px solid #6c88b4;
  border-radius: 3px;
}

.map {
  flex: 1;
  display: grid;
  border: 1px solid #7f9db9;
  min-height: 0;
}

.map-canvas {
  grid-area: 1 / 1;
  width: 100%;
  height: 100%;
  min-height: 0;
}

.map-lake {
  font: italic bold 60px "Liberation Serif", serif;
  fill: #2858a4;
}

.map-village {
  font: italic bold 72px "Liberation Serif", serif;
  fill: #4e4840;
}

.map-contour {
  font: bold 46px "Liberation Sans", sans-serif;
  fill: #c8643c;
}

.map-height {
  font: italic bold 46px "Liberation Sans", sans-serif;
  fill: #3c3a34;
}

.map-note {
  font: 30px "Liberation Sans", sans-serif;
}

.map-scale {
  font: bold 32px "Liberation Sans", sans-serif;
}

.map-status {
  font: bold 34px "Liberation Sans", sans-serif;
  fill: #fff;
}

.nav-pad {
  grid-area: 1 / 1;
  align-self: start;
  justify-self: end;
  display: grid;
  grid-template-areas: ". up ." "left mid right" ". down .";
  gap: 6px 7px;
  padding: 4px;
  background: #ece9d8;
}

.up { grid-area: up; }
.left { grid-area: left; }
.mid { grid-area: mid; }
.right { grid-area: right; }
.down { grid-area: down; }

.player {
  height: 22px;
  display: flex;
  align-items: center;
  gap: 7px;
  padding-left: 3px;
}

.modes .framed {
  margin: 0 -4px;
}

.speed {
  appearance: none;
  flex: 1;
  min-width: 0;
  height: 20px;
  margin: 0 2px 0 6px;
  background:
    linear-gradient(#fff, #fff) 0 6px / 100% 3px no-repeat,
    repeating-linear-gradient(to right, transparent 0 3px, #a8a490 3px 4px, transparent 4px 13px) 0 16px / 100% 3px no-repeat;
}

.speed::-webkit-slider-thumb {
  appearance: none;
  width: 6px;
  height: 11px;
  margin-top: -6px;
  background: #e4f0e4;
  border: 1px solid #6c9080;
  border-radius: 1px 1px 3px 3px;
}

.spin {
  width: 45px;
  height: 19px;
  flex: none;
  display: flex;
  background: #fff;
  border: 1px solid #7f9db9;
}

.spin input {
  flex: 1;
  min-width: 0;
  padding-left: 2px;
}

.spin-btns {
  width: 14px;
  display: grid;
  gap: 1px;
  padding: 1px;
}

.spin-btns button {
  background: #c8d6fb;
  min-height: 0;
}

.spin-btns svg {
  width: 8px;
  height: 5px;
}

.drop {
  width: 12px;
  height: 19px;
  flex: none;
  margin: 0 -4px 0 -2px;
  background: #fff;
  border: 1px solid #003c74;
  border-radius: 2px;
}

.statusbar {
  height: 19px;
  display: flex;
  align-items: center;
  padding-left: 4px;
  border-top: 1px solid #fff;
}

.ready {
  width: 89px;
}

.fill {
  flex: 1;
  height: 14px;
  border-left: 1px solid #c5c2b0;
}

.part {
  width: 36px;
  height: 14px;
  border-left: 1px solid #c5c2b0;
}

.statusbar svg {
  margin-left: 10px;
}

/* taskbar */
.taskbar {
  height: 30px;
  margin: 0 48px 0 52px;
  display: flex;
  align-items: center;
  padding-top: 3px;
  color: #fff;
  background: linear-gradient(#1f50c8 0, #3a88f0 3px, #2560dc 7px, #245edb 80%, #1c48b8);
  position: relative;
}

.start {
  width: 87px;
  height: 27px;
  gap: 5px;
  padding-right: 12px;
  font-size: 15px;
  font-style: italic;
  font-weight: bold;
  text-shadow: 1px 1px 1px #143c14;
  background: linear-gradient(#5cb45c, #3a983a 20%, #348c34 80%, #206820);
  border-radius: 0 8px 8px 0;
}

.grip {
  width: 6px;
  height: 20px;
  margin: 0 5px;
  background: repeating-linear-gradient(#1840a8 0 2px, transparent 2px 4px);
}

.task {
  flex: 1;
  min-width: 0;
  height: 23px;
  margin: 0 1px;
  justify-content: flex-start;
  gap: 3px;
  padding-left: 8px;
  white-space: nowrap;
  background: linear-gradient(#5a94f8, #3c80f0 20%, #3878ec);
  border-radius: 2px;
}

.task.on {
  background: #1c4cb8;
}

.lang {
  width: 25px;
}

.tray {
  align-self: stretch;
  display: flex;
  align-items: center;
  gap: 3px;
  margin-top: -2px;
  padding-right: 12px;
  background: linear-gradient(#38b0f8, #1290e8 20%, #1088e0 85%, #0c6cc0);
}

.tray-open {
  width: 15px;
  height: 15px;
  border-radius: 50%;
  margin-left: -8px;
  background: #3c94f4;
  border: 1px solid #7cc0fc;
}

.tray time {
  margin-left: 3px;
}

/* slide annotations, drawn over the window */
.marks {
  position: absolute;
  top: 0;
  left: 0;
  width: 100%;
  height: 100%;
  pointer-events: none;
}

.callout {
  position: absolute;
  left: 462px;
  top: 358px;
  width: 367px;
  height: 52px;
  padding-top: 6px;
  font-family: "Liberation Serif", "Times New Roman", serif;
  font-size: 23px;
  line-height: 25px;
  text-align: center;
  background: #f8f818;
  border: 4px solid #000;
}
```
